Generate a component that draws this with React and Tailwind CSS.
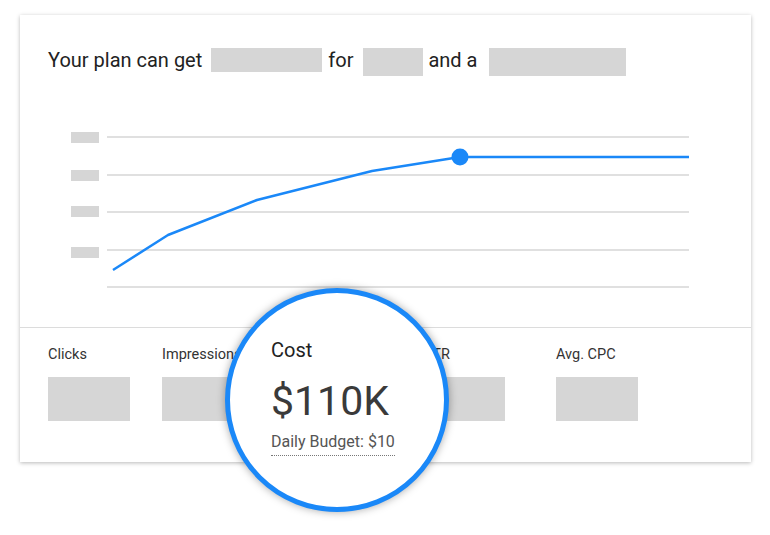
import React from "react";

const BLUE = "#1a88f8";

const gridY = [137, 175, 212, 250, 287];
const tickBoxes = [132, 170, 206, 247];
const linePoints = "113,270 168,235 257,200 372,171 460,157 689,157";

const stats = [
  { label: "Clicks", width: "w-[114px]" },
  { label: "Impressions", width: "w-[130px]" },
  { label: "Cost", width: "w-[131px]" },
  { label: "CTR", width: "w-[133px]" },
  { label: "Avg. CPC", width: "w-[120px]" },
];

export default function App() {
  return (
    <div
      className="relative h-[535px] w-[770px] overflow-hidden bg-white"
      style={{ fontFamily: "Roboto, 'Liberation Sans', sans-serif" }}
    >
      <div className="ml-[20px] mt-[15px] flex h-[447px] w-[731px] flex-col bg-white shadow-[0_1px_4px_rgba(0,0,0,0.28)]">
        {/* headline */}
        <div className="flex h-[61px] items-start pl-[28px] pt-[33px] text-[20px] leading-[24px] text-[#222]">
          <span>Your plan can get</span>
          <span className="ml-[9px] h-[24px] w-[111px] bg-[#d6d6d6]" />
          <span className="ml-[6px]">for</span>
          <span className="ml-[10px] h-[28px] w-[60px] bg-[#d6d6d6]" />
          <span className="ml-[5px]">and a</span>
          <span className="ml-[12px] h-[28px] w-[137px] bg-[#d6d6d6]" />
        </div>

        {/* chart */}
        <svg
          width="731"
          height="251"
          viewBox="20 76 731 251"
          className="block"
        >
          {gridY.map((y) => (
            <line
              key={y}
              x1="107"
              x2="689"
              y1={y}
              y2={y}
              stroke="#d6d6d6"
              strokeWidth="1.5"
            />
          ))}
          {tickBoxes.map((y) => (
            <rect key={y} x="71" y={y} width="28" height="11" fill="#d6d6d6" />
          ))}
          <polyline
            points={linePoints}
            fill="none"
            stroke={BLUE}
            strokeWidth="2.5"
            strokeLinejoin="round"
          />
          <circle cx="460" cy="157" r="8.5" fill={BLUE} />
        </svg>

        {/* stats */}
        <div className="flex flex-1 border-t border-[#dcdcdc] pl-[28px] pt-[19px]">
          {stats.map((s) => (
            <div key={s.label} className={`flex flex-col ${s.width}`}>
              <span className="text-[14.5px] leading-[16px] text-[#333]">
                {s.label}
              </span>
              <span className="mt-[14px] h-[44px] w-[82px] bg-[#d6d6d6]" />
            </div>
          ))}
        </div>
      </div>

      {/* magnifier lens */}
      <div className="absolute left-[225px] top-[288px] h-[224px] w-[224px] rounded-full border-[5px] border-[#1a88f8] bg-white shadow-[0_0_8px_rgba(0,0,0,0.35)]">
        <div className="flex flex-col items-start pl-[41px] pt-[45px]">
          <span className="text-[20px] leading-[24px] text-[#222]">Cost</span>
          <span className="mt-[19px] text-[41px] leading-[40px] text-[#3a3a3a]">
            $110K
          </span>
          <span className="mt-[11px] border-b border-dotted border-[#777] pb-[3px] text-[16px] leading-[20px] text-[#555]">
            Daily Budget: $10
          </span>
        </div>
      </div>
    </div>
  );
}
